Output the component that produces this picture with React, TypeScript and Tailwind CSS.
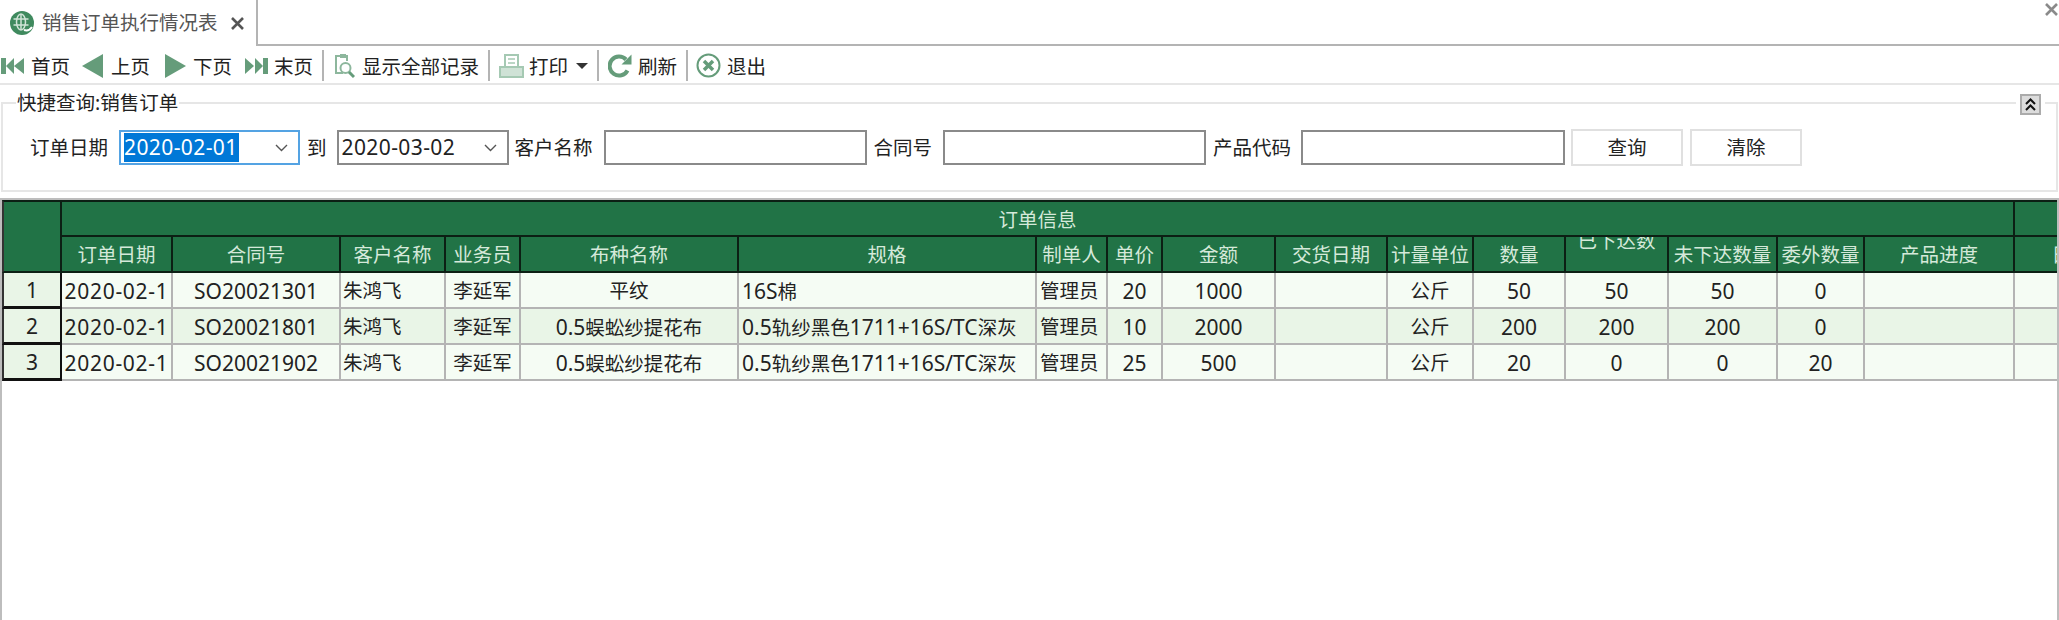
import { ReactNode } from 'react';

const colWidths = [60, 111, 168, 105, 75, 218, 298, 71, 55, 113, 112, 86, 92, 103, 109, 87, 150, 114];

const headers = ['订单日期', '合同号', '客户名称', '业务员', '布种名称', '规格', '制单人', '单价', '金额', '交货日期', '计量单位', '数量', '已下达数', '未下达数量', '委外数量', '产品进度', '日期'];

const rows = [
  ['2020-02-1', 'SO20021301', '朱鸿飞', '李延军', '平纹', '16S棉', '管理员', '20', '1000', '', '公斤', '50', '50', '50', '0', '', ''],
  ['2020-02-1', 'SO20021801', '朱鸿飞', '李延军', '0.5蜈蚣纱提花布', '0.5轨纱黑色1711+16S/TC深灰', '管理员', '10', '2000', '', '公斤', '200', '200', '200', '0', '', ''],
  ['2020-02-1', 'SO20021902', '朱鸿飞', '李延军', '0.5蜈蚣纱提花布', '0.5轨纱黑色1711+16S/TC深灰', '管理员', '25', '500', '', '公斤', '20', '0', '0', '20', '', ''],
];

// digits and latin letters run a bit larger than the chinese text
function Mixed({ text }: { text: string }) {
  const parts = text.match(/[\x20-\x7e]+|[^\x20-\x7e]+/g) ?? [];
  return (
    <>
      {parts.map((p, i) =>
        /^[\x20-\x7e]/.test(p) ? (
          <span key={i} className="text-[21px]">{p}</span>
        ) : (
          <span key={i}>{p}</span>
        )
      )}
    </>
  );
}

function cellAlign(c: number) {
  if (c === 0) return 'text-center tracking-[0.7px]';
  if (c === 2) return 'pl-[2px] text-left';
  if (c === 5 || c === 6) return 'pl-[3px] text-left';
  return 'text-center';
}

function ToolItem({ icon, label, className }: { icon: ReactNode; label: string; className: string }) {
  return (
    <div className={`flex items-center ${className}`}>
      {icon}
      <span className="whitespace-nowrap pt-[2px]">{label}</span>
    </div>
  );
}

function Sep({ className }: { className: string }) {
  return <div className={`h-[31px] w-[2px] bg-[#b4b4b4] ${className}`} />;
}

function FirstIcon() {
  return (
    <svg width="24" height="20" viewBox="0 0 24 20" className="mr-[6px]" fill="#659c7a">
      <rect x="0" y="2" width="5" height="16" />
      <path d="M13 2v16L5 10zM23 2v16l-10-8z" />
    </svg>
  );
}

function LastIcon() {
  return (
    <svg width="24" height="20" viewBox="0 0 24 20" className="mr-[6px]" fill="#659c7a">
      <rect x="19" y="2" width="5" height="16" />
      <path d="M1 2v16l9-8zM11 2v16l8-8z" />
    </svg>
  );
}

function PrevIcon() {
  return (
    <svg width="21" height="24" viewBox="0 0 21 24" className="mr-[8px]" fill="#659c7a">
      <path d="M21 0v24L0 12z" />
    </svg>
  );
}

function NextIcon() {
  return (
    <svg width="21" height="24" viewBox="0 0 21 24" className="mr-[7px]" fill="#659c7a">
      <path d="M0 0v24l21-12z" />
    </svg>
  );
}

function SearchDocIcon() {
  return (
    <svg width="21" height="26" viewBox="0 0 21 26" className="mr-[7px]" fill="none" stroke="#8db79d" strokeWidth="2">
      <path d="M7 3H2v17h7" />
      <path d="M7 3h6v5" strokeWidth="2" />
      <rect x="6" y="1" width="6" height="4" fill="#8db79d" stroke="none" />
      <circle cx="11.5" cy="15" r="5" />
      <path d="M15 19l5 5" stroke="#659c7a" strokeWidth="3" />
    </svg>
  );
}

function PrintIcon() {
  return (
    <svg width="25" height="24" viewBox="0 0 25 24" className="mr-[5px]" fill="none" stroke="#a5c9b3" strokeWidth="2">
      <path d="M6 13V1h13v12" />
      <path d="M9 5h7M9 9h7" strokeWidth="1.5" />
      <path d="M6 13H1v10h23V13h-5z" fill="#cfe2d6" />
    </svg>
  );
}

function RefreshIcon() {
  return (
    <svg width="24" height="24" viewBox="0 0 24 24" className="mr-[6px]" fill="none">
      <path d="M19.5 16.5A9.5 9.5 0 1 1 18 5.5" stroke="#659c7a" strokeWidth="4" />
      <path d="M23.5 0.5v10h-10z" fill="#659c7a" />
    </svg>
  );
}

function ExitIcon() {
  return (
    <svg width="25" height="25" viewBox="0 0 25 25" className="mr-[6px]" fill="none" stroke="#659c7a">
      <circle cx="12.5" cy="12.5" r="11" strokeWidth="2" />
      <path d="M8 8l9 9M17 8l-9 9" strokeWidth="3.5" />
    </svg>
  );
}

function Chevron() {
  return (
    <svg width="13" height="8" viewBox="0 0 13 8" fill="none" stroke="#555555" strokeWidth="1.4">
      <path d="M1 1l5.5 5.5L12 1" />
    </svg>
  );
}

function Label({ text, className }: { text: string; className: string }) {
  return <span className={`whitespace-nowrap ${className}`}>{text}</span>;
}

export default function App() {
  return (
    <div
      className="flex h-[620px] w-[2059px] flex-col overflow-hidden bg-white text-[19.5px] leading-none text-[#222222]"
      style={{ fontFamily: '"Noto Sans", "Noto Sans CJK SC", sans-serif' }}
    >
      {/* tab strip */}
      <div className="flex h-[46px] shrink-0">
        <div className="flex w-[258px] items-center border-r-2 border-[#b4b4b4] text-[#555555]">
          <svg width="24" height="24" viewBox="0 0 24 24" className="ml-[10px] mr-[8px]" fill="none" stroke="#cfe3d6" strokeWidth="1.5">
            <circle cx="12" cy="12" r="12" fill="#3f8a5e" stroke="none" />
            <ellipse cx="11" cy="11" rx="4.5" ry="8" />
            <path d="M11 3v16M3.5 8h15M3.5 14h15" />
            <path d="M14 19c3 1 6 0 8-3" strokeWidth="2" stroke="#ffffff" />
          </svg>
          <span className="whitespace-nowrap">销售订单执行情况表</span>
          <svg width="13" height="13" viewBox="0 0 13 13" className="ml-[13px]" stroke="#555555" strokeWidth="2.6">
            <path d="M1 1l11 11M12 1L1 12" />
          </svg>
        </div>
        <div className="relative flex-1 border-b-2 border-[#b4b4b4]">
          <svg width="13" height="13" viewBox="0 0 13 13" className="absolute right-[1px] top-[3px]" stroke="#8a8a8a" strokeWidth="2.6">
            <path d="M1 1l11 11M12 1L1 12" />
          </svg>
        </div>
      </div>

      {/* toolbar */}
      <div className="flex h-[39px] shrink-0 items-center border-b-2 border-[#e6e6e6] pt-[2px]">
        <ToolItem className="ml-[1px]" icon={<FirstIcon />} label="首页" />
        <ToolItem className="ml-[12px]" icon={<PrevIcon />} label="上页" />
        <ToolItem className="ml-[15px]" icon={<NextIcon />} label="下页" />
        <ToolItem className="ml-[12px]" icon={<LastIcon />} label="末页" />
        <Sep className="ml-[9px]" />
        <ToolItem className="ml-[10px]" icon={<SearchDocIcon />} label="显示全部记录" />
        <Sep className="ml-[9px]" />
        <ToolItem className="ml-[9px]" icon={<PrintIcon />} label="打印" />
        <div className="ml-[8px] h-0 w-0 border-x-[6px] border-t-[6px] border-x-transparent border-t-[#333333]" />
        <Sep className="ml-[9px]" />
        <ToolItem className="ml-[9px]" icon={<RefreshIcon />} label="刷新" />
        <Sep className="ml-[9px]" />
        <ToolItem className="ml-[8px]" icon={<ExitIcon />} label="退出" />
      </div>

      {/* quick query group */}
      <div className="relative mx-[1px] mt-[17px] h-[90px] shrink-0 border-2 border-[#e6e6e6]">
        <span className="absolute left-[13px] top-[-12px] whitespace-nowrap bg-white px-[1px] leading-[22px]">快捷查询:销售订单</span>
        <div className="absolute right-[15px] top-[-10px] flex h-[21px] w-[21px] items-center justify-center border-2 border-[#ababab] bg-[#dcdcdc] outline-4 outline-white">
          <svg width="13" height="13" viewBox="0 0 13 13" fill="none" stroke="#111111" strokeWidth="2">
            <path d="M2 6l4.5-4.5L11 6M2 12l4.5-4.5L11 12" />
          </svg>
        </div>
        <div className="flex items-center pt-[25px]">
          <Label text="订单日期" className="ml-[27px]" />
          <div className="ml-[11px] flex h-[35px] w-[181px] items-center border-2 border-[#54a3e3] pl-[3px] pr-[10px]">
            <span className="bg-[#0078d7] py-[4px] pr-[1px] text-[21px] tracking-[0.4px] text-white">2020-02-01</span>
            <span className="ml-auto"><Chevron /></span>
          </div>
          <Label text="到" className="ml-[7px]" />
          <div className="ml-[10px] flex h-[35px] w-[172px] items-center border-2 border-[#8a8a8a] pl-[3px] pr-[10px]">
            <span className="text-[21px] tracking-[0.4px]">2020-03-02</span>
            <span className="ml-auto"><Chevron /></span>
          </div>
          <Label text="客户名称" className="ml-[6px]" />
          <div className="ml-[11px] h-[35px] w-[263px] border-2 border-[#8a8a8a]" />
          <Label text="合同号" className="ml-[7px]" />
          <div className="ml-[11px] h-[35px] w-[263px] border-2 border-[#8a8a8a]" />
          <Label text="产品代码" className="ml-[7px]" />
          <div className="ml-[10px] h-[35px] w-[264px] border-2 border-[#8a8a8a]" />
          <div className="ml-[6px] flex h-[37px] w-[112px] items-center justify-center border-2 border-[#e0e0e0]">查询</div>
          <div className="ml-[7px] flex h-[37px] w-[112px] items-center justify-center border-2 border-[#e0e0e0]">清除</div>
        </div>
      </div>

      {/* data grid */}
      <div className="mt-[6px] flex-1 overflow-hidden border-x-2 border-t-2 border-[#bdbdbd]">
        <table className="table-fixed border-separate border-spacing-0" style={{ width: colWidths.reduce((a, b) => a + b, 0) }}>
          <colgroup>
            {colWidths.map((w, i) => (
              <col key={i} style={{ width: w }} />
            ))}
          </colgroup>
          <thead className="bg-[#217346] text-[#d5e9da]">
            <tr className="h-[37px]">
              <th rowSpan={2} className="border-x-2 border-y-2 border-[#0c1f14] border-l-[#333333]" />
              <th colSpan={16} className="border-y-2 border-r-2 border-[#0c1f14] pt-[2px] font-normal">订单信息</th>
              <th className="border-y-2 border-[#0c1f14]" />
            </tr>
            <tr className="h-[36px]">
              {headers.map((h, i) => (
                <th key={h} className="overflow-hidden border-b-2 border-r-2 border-[#0c1f14] pt-[2px] font-normal whitespace-nowrap">
                  <div className={i === 12 ? 'relative -top-[14px]' : ''}>{h}</div>
                </th>
              ))}
            </tr>
          </thead>
          <tbody>
            {rows.map((row, r) => (
              <tr key={r} className={`h-[36px] ${r === 1 ? 'bg-[#e9f5e7]' : 'bg-[#f5fcf4]'}`}>
                <td className="border-x-2 border-b-[3px] border-[#111111] border-l-[#333333] bg-[#e9f5e7] pt-[2px] text-center text-[21px]">{r + 1}</td>
                {row.map((cell, c) => (
                  <td key={c} className={`overflow-hidden border-b-2 border-r-2 border-[#b4b4b4] pt-[2px] whitespace-nowrap ${cellAlign(c)}`}>
                    <Mixed text={cell} />
                  </td>
                ))}
              </tr>
            ))}
          </tbody>
        </table>
      </div>
    </div>
  );
}
